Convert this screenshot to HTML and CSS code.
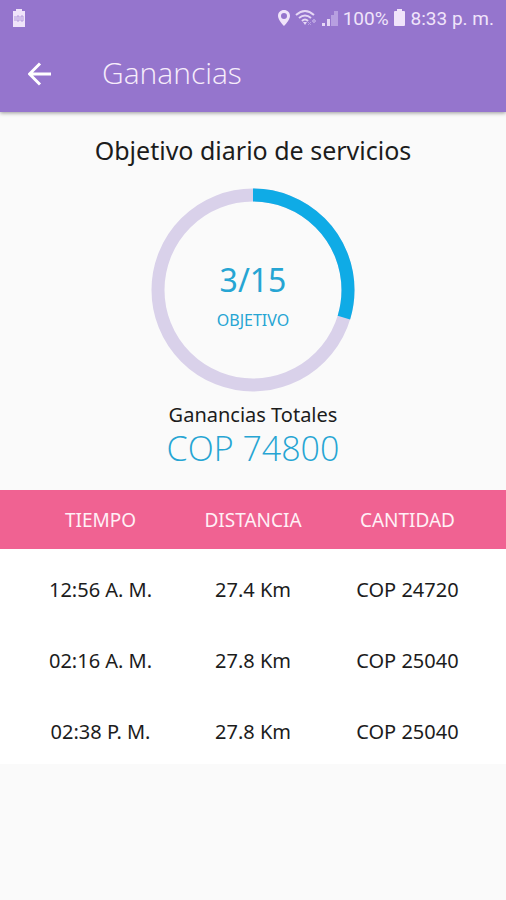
FILE: index.html
```
<!DOCTYPE html>
<html lang="es">
<head>
    <meta charset="UTF-8">
    <meta name="viewport" content="width=device-width, initial-scale=1.0">
    <title>Ganancias</title>
    <link rel="stylesheet" href="styles.css">
</head>
<body>
    <header class="header">
        <div class="status-bar">
            <svg class="status-battery" width="14" height="20" viewBox="0 0 14 20" aria-hidden="true">
                <path d="M4 1h6v2h3v16H1V3h3z" fill="#f0e4fa"/>
                <path d="M3 8v5M5 8h2v5H5zM9 8h2v5H9z" fill="none" stroke="#b49bdc"/>
            </svg>
            <div class="status-icons">
                <svg width="14" height="18" viewBox="0 0 14 18" aria-hidden="true">
                    <path fill-rule="evenodd" d="M7 1C3.500 1 1 3.500 1 7c0 4 6 10 6 10s6-6 6-10c0-3.500-2.500-6-6-6zm0 3a3 3 0 1 1 0 6 3 3 0 0 1 0-6z" fill="#f0e4fa"/>
                </svg>
                <svg width="22" height="18" viewBox="0 0 22 18" aria-hidden="true">
                    <path d="M1 6Q10-2 19 6M4 9Q10 4 16 9M7 12Q10 9 13 12" fill="none" stroke="#e6d8f5" stroke-width="2"/>
                    <path d="M8 13h4l-2 3z" fill="#e6d8f5"/>
                    <path d="M13 13l3 3M16 13l-3 3M19 10l2 2-2 2-2-2z" fill="#b79fe0" stroke="#b79fe0"/>
                </svg>
                <svg width="18" height="18" viewBox="0 0 18 18" aria-hidden="true">
                    <path d="M1 14h3v3H1zM6 10h3v7H6z" fill="#e6d8f5"/>
                    <path d="M10 6h3v11h-3zM13 2h4v15h-4z" fill="#b79fe0"/>
                </svg>
                <span>100%</span>
                <svg width="14" height="18" viewBox="0 0 14 18" aria-hidden="true">
                    <path d="M4 0h5v2h2q1 0 1 1v13q0 1-1 1H2q-1 0-1-1V3q0-1 1-1h2z" fill="#f0e4fa"/>
                </svg>
                <time>8:33 p. m.</time>
            </div>
        </div>
        <div class="app-bar">
            <button type="button" class="back-button" aria-label="Volver">
                <svg width="24" height="24" viewBox="0 0 24 24" aria-hidden="true">
                    <path d="M23 12H2M12 1.500L1.500 12 12 22.500" fill="none" stroke="#fff" stroke-width="3"/>
                </svg>
            </button>
            <h1>Ganancias</h1>
        </div>
    </header>

    <main>
        <section class="summary">
            <h2>Objetivo diario de servicios</h2>
            <div class="goal">
                <svg class="goal-ring" viewBox="0 0 204 204" aria-hidden="true">
                    <circle cx="102" cy="102" r="95" fill="none" stroke="#d9d1ea" stroke-width="13"/>
                    <circle cx="102" cy="102" r="95" fill="none" stroke="#0fabe6" stroke-width="13" pathLength="360" stroke-dasharray="107 253" transform="rotate(-90 102 102)"/>
                </svg>
                <p class="goal-value">3/15</p>
                <p class="goal-label">OBJETIVO</p>
            </div>
            <p class="total-label">Ganancias Totales</p>
            <p class="total-value">COP 74800</p>
        </section>

        <table class="earnings">
            <thead>
                <tr>
                    <th scope="col">TIEMPO</th>
                    <th scope="col">DISTANCIA</th>
                    <th scope="col">CANTIDAD</th>
                </tr>
            </thead>
            <tbody>
                <tr>
                    <td>12:56 A. M.</td>
                    <td>27.4 Km</td>
                    <td>COP 24720</td>
                </tr>
                <tr>
                    <td>02:16 A. M.</td>
                    <td>27.8 Km</td>
                    <td>COP 25040</td>
                </tr>
                <tr>
                    <td>02:38 P. M.</td>
                    <td>27.8 Km</td>
                    <td>COP 25040</td>
                </tr>
            </tbody>
        </table>
    </main>
</body>
</html>
```

FILE: styles.css
```
:root {
    --primary-color: #9575cd;
    --accent-color: #f06292;
    --blue: #26a5d3;
    --text-color: #1c1c1c;
}

* {
    margin: 0;
    padding: 0;
    box-sizing: border-box;
}

body {
    font-family: 'Noto Sans', 'Open Sans', sans-serif;
    color: var(--text-color);
    background-color: #fafafa;
}

.header {
    background-color: var(--primary-color);
    box-shadow: 0 1px 4px rgba(0, 0, 0, 0.4);
}

/* Status bar */
.status-bar {
    display: flex;
    align-items: center;
    justify-content: space-between;
    height: 36px;
    padding: 0 12px;
    font-family: Roboto, sans-serif;
    font-size: 19px;
    color: #f0e4fa;
}

.status-icons {
    display: flex;
    align-items: center;
    gap: 4px;
}

/* App bar */
.app-bar {
    display: flex;
    align-items: center;
    height: 76px;
    padding: 0 28px;
    gap: 50px;
}

.back-button {
    display: flex;
    background: none;
    border: none;
    cursor: pointer;
}

h1 {
    padding-bottom: 4px;
    font-family: 'Open Sans', 'Noto Sans', sans-serif;
    font-size: 30px;
    font-weight: 300;
    color: #f7edfb;
}

/* Daily goal */
.summary {
    padding: 20px 0 24px;
    text-align: center;
}

h2 {
    font-size: 25px;
    font-weight: 400;
    line-height: 36px;
}

.goal {
    display: grid;
    justify-items: center;
    align-content: center;
    width: 204px;
    height: 204px;
    margin: 20px auto 8px;
    padding-top: 16px;
    color: var(--blue);
}

.goal-ring {
    position: absolute;
    width: 204px;
    height: 204px;
    margin-top: -16px;
}

.goal-value {
    font-size: 32px;
    line-height: 44px;
}

.goal-label {
    font-size: 16px;
    line-height: 36px;
}

.total-label {
    font-size: 20px;
    line-height: 30px;
}

.total-value {
    font-family: 'Open Sans', 'Noto Sans', sans-serif;
    font-size: 34px;
    font-weight: 300;
    line-height: 36px;
    color: var(--blue);
}

/* Trips table */
.earnings {
    width: 100%;
    table-layout: fixed;
    border-collapse: collapse;
    background-color: #fff;
    font-size: 20px;
    text-align: center;
}

.earnings th {
    width: 30%;
    height: 59px;
    background-color: var(--accent-color);
    color: #fff0f6;
    font-size: 19px;
    font-weight: 400;
}

.earnings td {
    height: 71px;
    padding-top: 10px;
}

.earnings tr:last-child td {
    height: 73px;
    padding-bottom: 2px;
}

.earnings th:first-child,
.earnings td:first-child {
    width: 35%;
    padding-left: 24px;
}

.earnings th:last-child,
.earnings td:last-child {
    width: 35%;
    padding-right: 20px;
}
```
